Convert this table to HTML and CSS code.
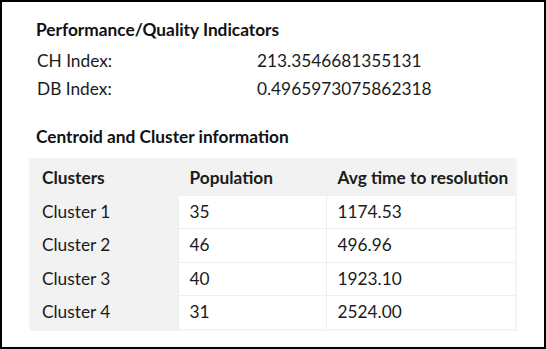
FILE: index.html
```html
<!DOCTYPE html>
<html lang="en">
<head>
    <meta charset="UTF-8">
    <title>Cluster report</title>
    <link rel="stylesheet" href="styles.css">
</head>
<body>
    <div class="panel">
        <h3 class="section-title">Performance/Quality Indicators</h3>
        <div class="metrics">
            <div class="metric-label">CH Index:</div>
            <div class="metric-value">213.3546681355131</div>
            <div class="metric-label">DB Index:</div>
            <div class="metric-value">0.4965973075862318</div>
        </div>

        <h3 class="section-title second">Centroid and Cluster information</h3>
        <table class="cluster-table">
            <thead>
                <tr>
                    <th class="col-name">Clusters</th>
                    <th class="col-pop">Population</th>
                    <th>Avg time to resolution</th>
                </tr>
            </thead>
            <tbody>
                <tr><td>Cluster 1</td><td>35</td><td>1174.53</td></tr>
                <tr><td>Cluster 2</td><td>46</td><td>496.96</td></tr>
                <tr><td>Cluster 3</td><td>40</td><td>1923.10</td></tr>
                <tr><td>Cluster 4</td><td>31</td><td>2524.00</td></tr>
            </tbody>
        </table>
    </div>
</body>
</html>
```

FILE: styles.css
```css
* {
    margin: 0;
    padding: 0;
    box-sizing: border-box;
}

body {
    font-family: Lato, "Noto Sans", sans-serif;
    font-size: 17.3px;
    color: #1b1b1b;
    background-color: #fff;
}

.panel {
    width: 546px;
    height: 349px;
    border: 2px solid #000;
    padding: 16px 27px 0 27px;
}

.section-title {
    font-size: 17.3px;
    font-weight: bold;
    color: #111;
    line-height: 24px;
    padding-left: 7px;
}

.section-title.second {
    margin-top: 24px;
}

.metrics {
    display: grid;
    grid-template-columns: 220px auto;
    row-gap: 4px;
    padding-left: 8px;
    margin-top: 7px;
    line-height: 24px;
}

.cluster-table {
    width: 100%;
    table-layout: fixed;
    margin-top: 9px;
    border-collapse: collapse;
    border: 2px solid #f4f4f4;
}

.cluster-table th,
.cluster-table td {
    text-align: left;
    white-space: nowrap;
    padding: 0 11px;
    border: 1px solid #efefef;
    line-height: 32.4px;
}

.cluster-table th {
    font-weight: bold;
    background-color: #f2f2f2;
    padding-top: 1px;
    line-height: 34px;
}

.cluster-table td:first-child {
    background-color: #f2f2f2;
}

.col-name {
    width: 148px;
}

.col-pop {
    width: 148px;
}
```
